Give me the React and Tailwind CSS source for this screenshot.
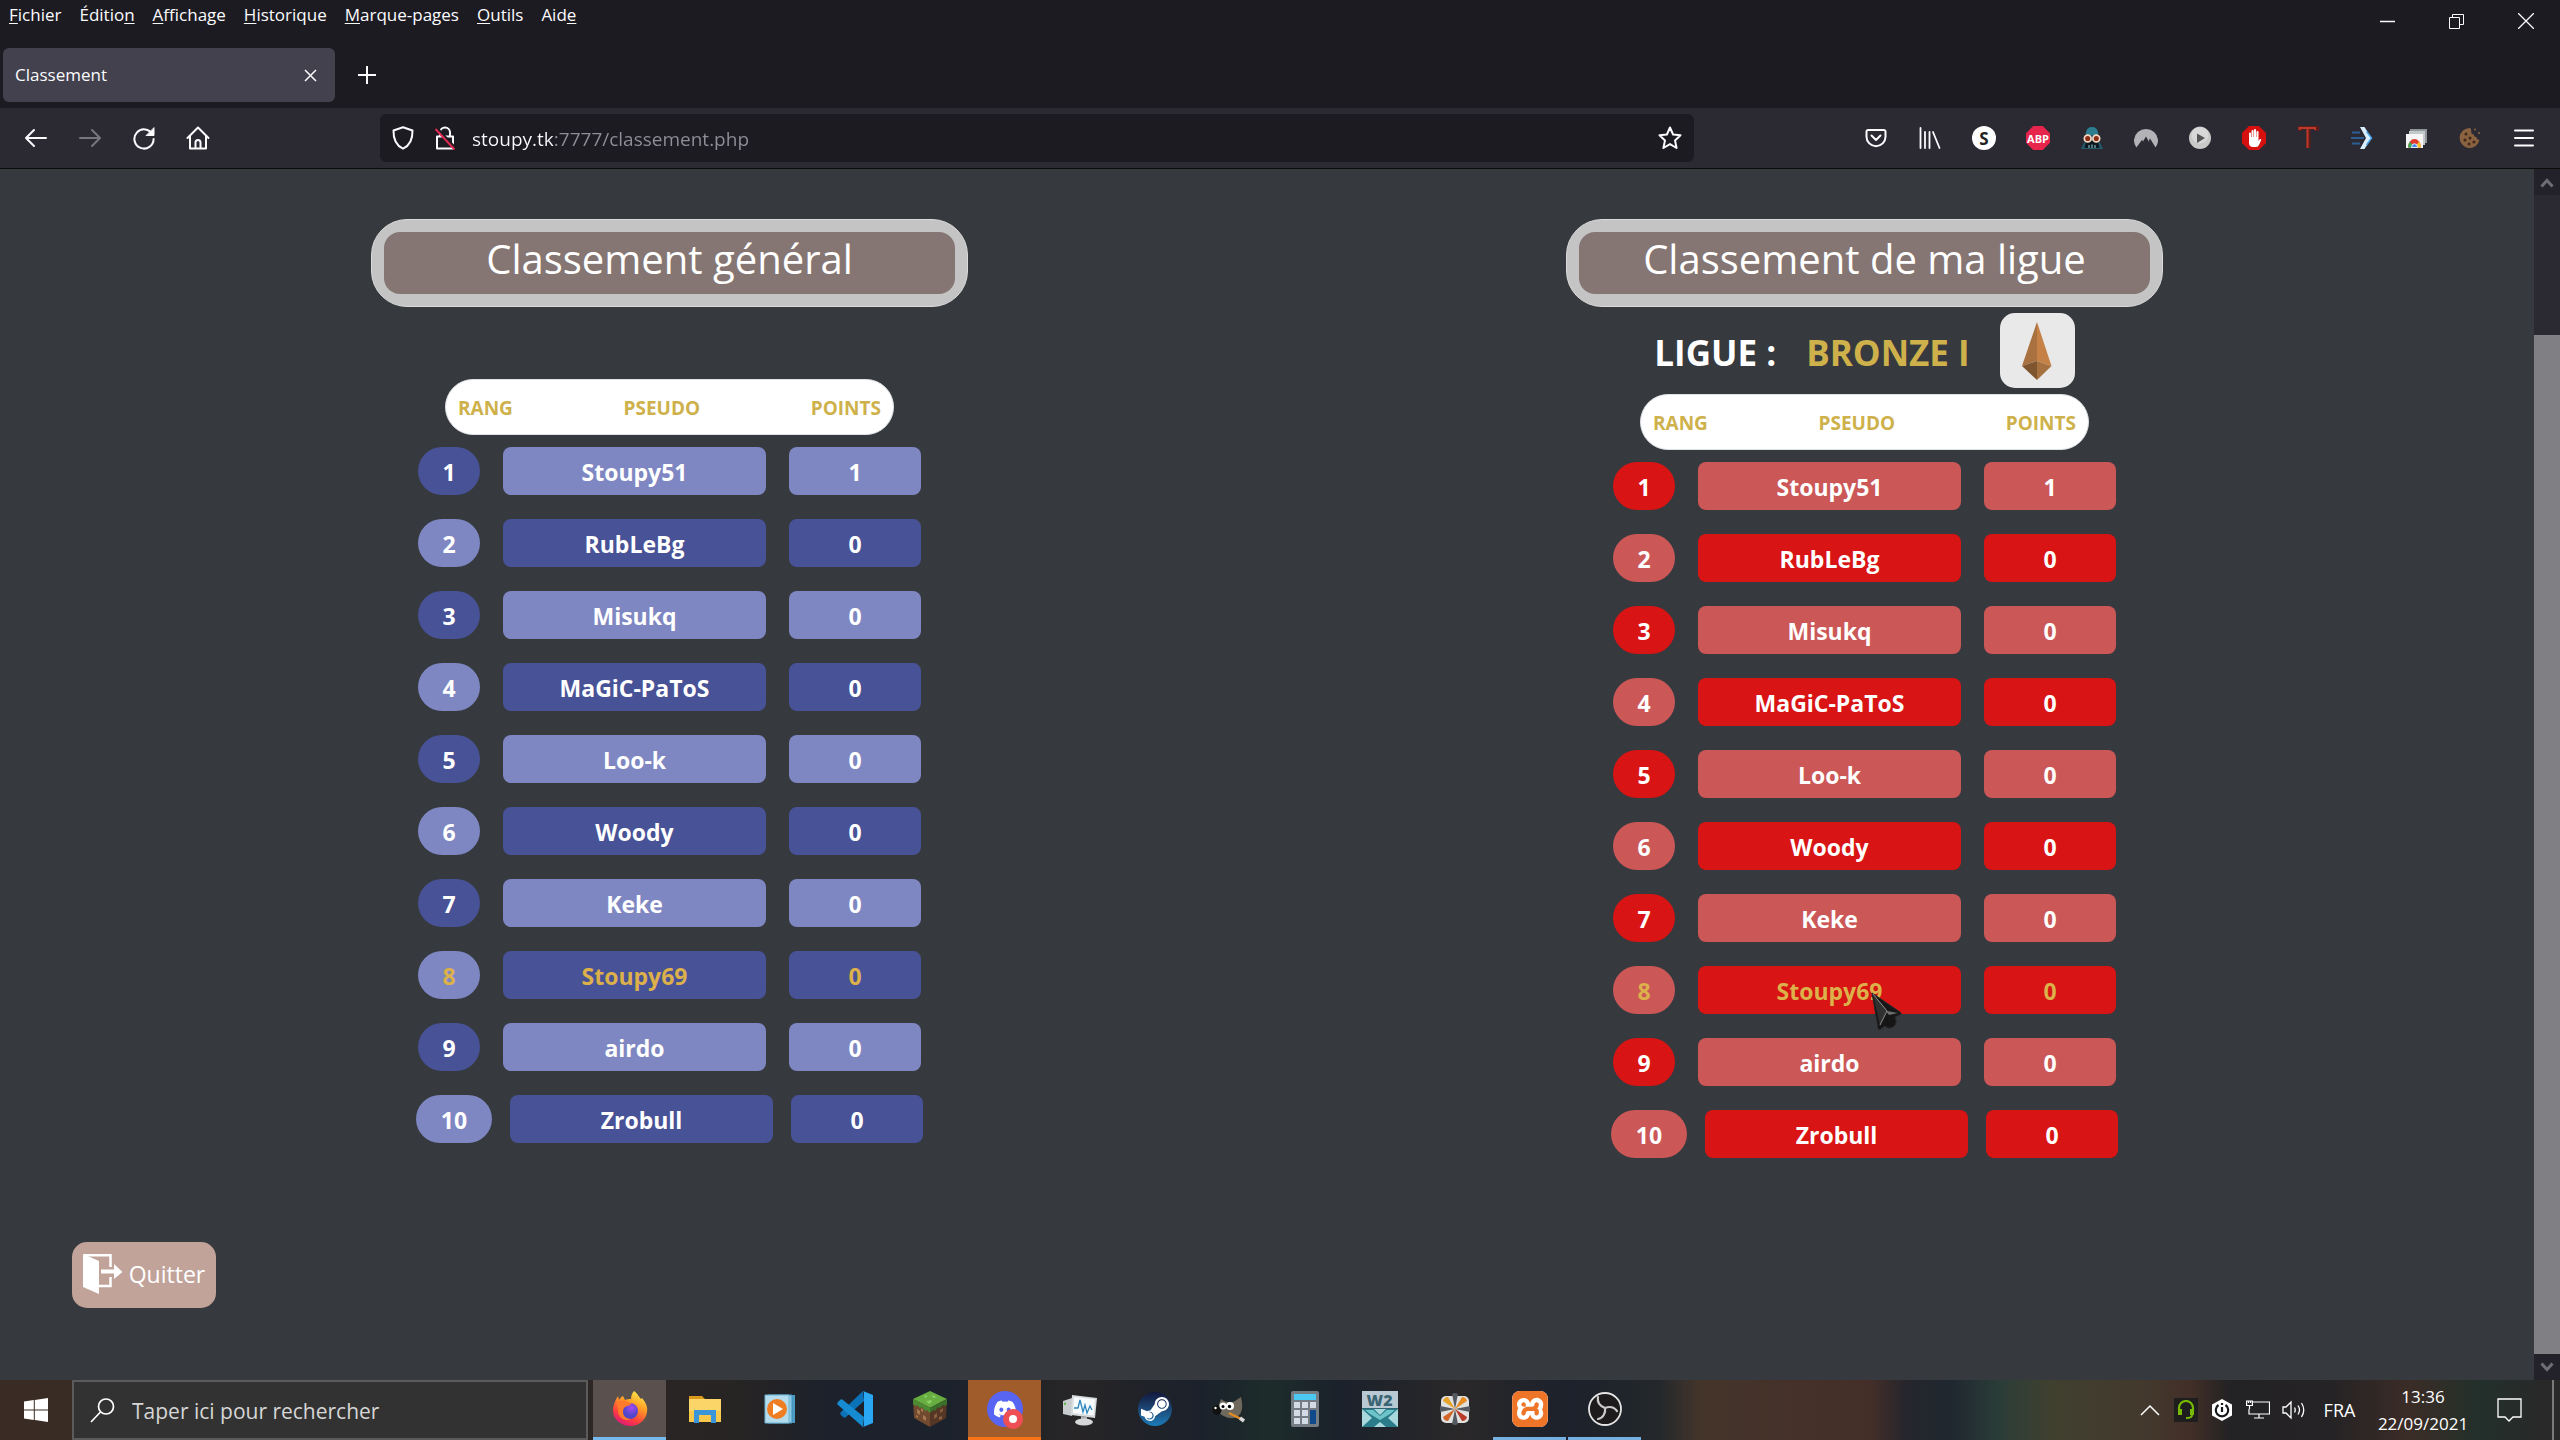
import React from "react";
import { FaDiscord, FaSteamSymbol } from "react-icons/fa";
import { SiXampp } from "react-icons/si";

const players = [
  ["1", "Stoupy51", "1"],
  ["2", "RubLeBg", "0"],
  ["3", "Misukq", "0"],
  ["4", "MaGiC-PaToS", "0"],
  ["5", "Loo-k", "0"],
  ["6", "Woody", "0"],
  ["7", "Keke", "0"],
  ["8", "Stoupy69", "0"],
  ["9", "airdo", "0"],
  ["10", "Zrobull", "0"],
];

const themes = {
  blue: { dark: "bg-[#485297]", light: "bg-[#7e87c2]" },
  red: { dark: "bg-[#d91414]", light: "bg-[#cb5757]" },
};

const CURRENT = "Stoupy69";

/* ---------- browser chrome ---------- */

const menus = [
  ["", "F", "ichier"],
  ["Éditio", "n", ""],
  ["", "A", "ffichage"],
  ["", "H", "istorique"],
  ["", "M", "arque-pages"],
  ["", "O", "utils"],
  ["Aid", "e", ""],
];

function Line({ size = 24, width = 2, className = "", children }) {
  return (
    <svg
      width={size}
      height={size}
      viewBox="0 0 24 24"
      fill="none"
      stroke="currentColor"
      strokeWidth={width}
      strokeLinecap="round"
      strokeLinejoin="round"
      className={className}
      aria-hidden="true"
    >
      {children}
    </svg>
  );
}

function IconButton({ label, className = "", children }) {
  return (
    <button aria-label={label} className={`flex h-12 shrink-0 items-center justify-center ${className}`}>
      {children}
    </button>
  );
}

function TitleArea() {
  return (
    <header className="flex items-start justify-between bg-[#1c1b22]">
      <div>
        <nav className="flex h-12 items-start gap-[18px] pt-[3px] pl-[9px] text-[17px] leading-[23px] text-[#fbfbfe]">
          {menus.map(([a, k, b]) => (
            <button key={a + k + b}>
              {a}
              <span className="underline underline-offset-2">{k}</span>
              {b}
            </button>
          ))}
        </nav>
        <div className="flex h-[60px] items-start pl-[3px]">
          <div className="flex h-[54px] w-[332px] items-center justify-between rounded-md bg-[#42414d] pr-[18px] pl-3 text-[17px] text-[#fbfbfe]">
            <span>Classement</span>
            <button aria-label="Fermer l'onglet">
              <svg width="13" height="13" viewBox="0 0 13 13" stroke="currentColor" strokeWidth="1.500">
                <path d="M1 1l11 11M12 1L1 12" />
              </svg>
            </button>
          </div>
          <IconButton label="Nouvel onglet" className="w-16 pt-1.5">
            <svg width="18" height="18" viewBox="0 0 18 18" stroke="#fbfbfe" strokeWidth="2">
              <path d="M9 0v18M0 9h18" />
            </svg>
          </IconButton>
        </div>
      </div>
      <div className="flex h-[42px] text-[#fbfbfe]">
        <button aria-label="Réduire" className="flex w-[69px] items-center justify-center">
          <svg width="15" height="15" stroke="currentColor" fill="none"><path d="M0 7.500h15" strokeWidth="1.500" /></svg>
        </button>
        <button aria-label="Restaurer" className="flex w-[69px] items-center justify-center">
          <svg width="15" height="15" viewBox="0 0 15 15" stroke="currentColor" fill="none">
            <path d="M.5 3.500h10v11H.5zM3.500 3.500v-3h11v10h-4" />
          </svg>
        </button>
        <button aria-label="Fermer" className="flex w-[69px] items-center justify-center">
          <svg width="16" height="16" stroke="currentColor" strokeWidth="1.300"><path d="M0 0l16 16M16 0L0 16" /></svg>
        </button>
      </div>
    </header>
  );
}

const extensions = [
  ["Pocket", <Line><path d="M4.200 4h15.600a1.700 1.700 0 0 1 1.700 1.700v5a9.500 9.500 0 0 1-19 0v-5A1.700 1.700 0 0 1 4.200 4z" /><path d="M7.500 9.500L12 14l4.500-4.500" /></Line>],
  ["Bibliothèque", <Line width={1.8}><path d="M2.500 2v20M7 6v16M11.500 6v16M15 6l6.500 16" /></Line>],
  ["Stylus", <span className="flex size-6 items-center justify-center rounded-full bg-white text-[17px] leading-none font-bold text-[#222]">S</span>],
  ["Adblock Plus", (
    <span className="flex size-6 items-center justify-center bg-[#e6244c] text-[11px] leading-none font-bold text-white [clip-path:polygon(30%_0,70%_0,100%_30%,100%_70%,70%_100%,30%_100%,0_70%,0_30%)]">ABP</span>
  )],
  ["Masque", (
    <svg width="24" height="24" viewBox="0 0 24 24">
      <path d="M12 1c4.500 0 6 3 6.300 7L19 15l4 8H1l4-8 .7-7C6 4 7.500 1 12 1z" fill="#245c6d" />
      <path d="M12 1c4 0 6 3 6 8H6c0-5 2-8 6-8z" fill="#2d7d90" />
      <path d="M6 15h12l1.500 7h-15z" fill="#101820" />
      <circle cx="7.700" cy="12.500" r="3.400" fill="#8a2d17" stroke="#f4d8c4" strokeWidth="1.700" />
      <circle cx="16.300" cy="12.500" r="3.400" fill="#8a2d17" stroke="#f4d8c4" strokeWidth="1.700" />
      <path d="M9 19v3M12 18.500v3.500M15 19v3" stroke="#8fd3e0" strokeWidth="1" />
    </svg>
  )],
  ["NordVPN", (
    <svg width="24" height="24" viewBox="0 0 24 24">
      <path d="M2.400 21.500A12 11.500 0 1 1 21.600 21.500L16 12.500l-1.200 2.200.8 2.300-3.600-6.500-3 5-.9-1.700z" fill="#b3b3b7" />
    </svg>
  )],
  ["Lecture", (
    <svg width="24" height="24" viewBox="0 0 24 24">
      <circle cx="12" cy="12" r="11" fill="#c9c9c9" />
      <circle cx="12" cy="9" r="8.500" fill="#dedede" opacity=".7" />
      <path d="M9 7.500l8 4.500-8 5z" fill="#555" />
    </svg>
  )],
  ["AdBlock", (
    <svg width="24" height="24" viewBox="0 0 24 24">
      <path d="M7 0h10l7 7v10l-7 7H7l-7-7V7z" fill="#d6100f" />
      <path d="M7 12V7.500a1 1 0 0 1 2 0V11h.5V5a1 1 0 0 1 2.100 0v6h.4V4a1 1 0 0 1 2.100 0v7h.4V6a1 1 0 0 1 2 0v9l1-1.500c.8-1 2-.4 1.700.6L17 19c-.6 1.300-1.500 2-3 2h-3c-2.500 0-4-1.500-4-4z" fill="#fff" />
    </svg>
  )],
  ["Tampon", (
    <svg width="24" height="24" viewBox="0 0 24 24" fill="none">
      <path d="M4 5V1.500h17V5M12.500 2v20" stroke="#5f1c18" strokeWidth="4" />
      <path d="M3.500 4V2h15.500v2M11.500 2v20" stroke="#bd3a2a" strokeWidth="2" />
    </svg>
  )],
  ["Raccourci", (
    <svg width="24" height="24" viewBox="0 0 24 24">
      <path d="M10 1h4.500l7 11-7 11H10l6-11z" fill="#d9efff" />
      <path d="M16.500 5.500L21.500 12l-5 7" fill="none" stroke="#4aa3e8" strokeWidth="1.500" />
      <path d="M2 6.500h8M1 12h13M2 17.500h8" stroke="#2d5f94" strokeWidth="1.800" />
    </svg>
  )],
  ["Chrome Store", (
    <svg width="24" height="24" viewBox="0 0 24 24">
      <path d="M6 3h17v14H6z" fill="#8f979b" /><path d="M5 5h16v14H5z" fill="#c4c9cc" />
      <path d="M2 8h17v14H2z" fill="#f5f5f5" />
      <path d="M4 21.500a6.500 8.500 0 0 1 13 0z" fill="#e23b2e" />
      <path d="M4 21.500a6.500 8.500 0 0 1 2-6l4 6z" fill="#38a852" /><path d="M17 21.500a6.500 8.500 0 0 0-2-6l-4 6z" fill="#f7c52c" />
      <path d="M7.500 21.500a3 3.800 0 0 1 6 0z" fill="#4688f1" stroke="#fff" strokeWidth=".8" />
    </svg>
  )],
  ["Cookies", (
    <svg width="24" height="24" viewBox="0 0 24 24">
      <path d="M12 2a10 10 0 1 0 9.500 11.500c-2 .5-3-.5-2.800-2.500-2 .3-3-.8-2.700-2.500-2 0-3-1-2.700-3C13 4 13.500 3 12 2z" fill="#8b6240" />
      <g fill="#3f2a1a"><circle cx="8" cy="8" r="1.500" /><circle cx="7" cy="14" r="1.600" /><circle cx="12" cy="12" r="1.500" /><circle cx="11" cy="18" r="1.500" /><circle cx="16" cy="16" r="1.600" /></g>
      <g fill="#8b6240"><circle cx="17" cy="3.500" r="1" /><circle cx="21" cy="7" r="1.100" /></g>
    </svg>
  )],
];

function Toolbar() {
  return (
    <div className="flex h-[61px] items-start justify-between border-b border-[#0c0c0d] bg-[#2b2a33] pt-1.5 pr-[9px] pl-[9px] text-[#fbfbfe]">
      <div className="flex">
        <IconButton label="Précédent" className="w-[54px]"><Line><path d="M22 12H2.500M10 4l-8 8 8 8" /></Line></IconButton>
        <IconButton label="Suivant" className="w-[54px] text-[#77767e]"><Line><path d="M2 12h19.500M14 4l8 8-8 8" /></Line></IconButton>
        <IconButton label="Actualiser" className="w-[54px]">
          <Line><path d="M20.500 8.500A9.600 9.600 0 1 0 21.600 13" /><path d="M22 2v7.500h-7.500z" fill="currentColor" strokeWidth="1" /></Line>
        </IconButton>
        <IconButton label="Accueil" className="w-[54px]">
          <Line><path d="M1.500 12L12 1.500 22.500 12M4 10v12.500h16V10M9.500 22v-5.500a2.500 2.500 0 0 1 5 0V22" /></Line>
        </IconButton>
      </div>
      <div className="ml-[155px] flex h-12 min-w-0 flex-1 items-center rounded-md bg-[#1c1b22] pr-3 pl-[11px]">
        <Line className="shrink-0"><path d="M12 1.300l9.500 3.200c.2 8-1.500 14.500-9.500 18.200C4 19 2.300 12.500 2.500 4.500z" /></Line>
        <svg width="24" height="24" viewBox="0 0 24 24" fill="none" className="ml-[18px] shrink-0" aria-hidden="true">
          <path d="M7 10.500V6.500a5 5 0 0 1 10 0v4M4 10.500h16v12H4z" stroke="#fbfbfe" strokeWidth="2" strokeLinejoin="round" />
          <path d="M4.500 2.500l18 19.500" stroke="#1c1b22" strokeWidth="2.500" />
          <path d="M2.500 3l19 20.500" stroke="#e22850" strokeWidth="2" />
        </svg>
        <input
          aria-label="Adresse"
          defaultValue="stoupy.tk:7777/classement.php"
          className="ml-[15px] h-12 min-w-0 flex-1 bg-[linear-gradient(90deg,#fbfbfe_82px,#8f8f97_82px)] bg-clip-text pt-0.5 text-[19px] text-transparent outline-none"
        />
        <Line className="shrink-0"><path d="M12 1.500l3.100 7 7.400.8-5.500 5.100 1.600 7.600-6.600-3.900L5.400 22 7 14.400 1.500 9.300l7.400-.8z" /></Line>
      </div>
      <div className="ml-[155px] flex">
        {extensions.map(([name, icon]) => (
          <IconButton key={name} label={name} className="w-[54px]">{icon}</IconButton>
        ))}
        <IconButton label="Menu" className="w-[54px]">
          <Line><path d="M3 4.500h18M3 12h18M3 19.500h18" /></Line>
        </IconButton>
      </div>
    </div>
  );
}

function Scrollbar() {
  return (
    <div className="flex w-[26px] shrink-0 flex-col items-center bg-[#2b2a33]">
      <button aria-label="Défiler vers le haut" className="flex h-[26px] w-full items-center justify-center bg-[#23222b]">
        <svg width="14" height="11" fill="none" stroke="#6f6e77" strokeWidth="3"><path d="M1.500 9.500l5.500-6 5.500 6" /></svg>
      </button>
      <div className="flex w-full flex-1 flex-col">
        <div className="flex-[14]" />
        <div className="flex-[102] bg-[#7f7f84]" />
      </div>
      <button aria-label="Défiler vers le bas" className="flex h-[26px] w-full items-center justify-center bg-[#23222b]">
        <svg width="14" height="11" fill="none" stroke="#6f6e77" strokeWidth="3"><path d="M1.500 1.500l5.500 6 5.500-6" /></svg>
      </button>
    </div>
  );
}

/* ---------- page ---------- */

function Title({ children }) {
  return (
    <div className="w-[597px] rounded-[36px] border border-[#dadada] bg-[#c4c4c4] p-3">
      <h1 className="rounded-2xl bg-[#857673] pt-px pb-[9px] text-center text-[40px] leading-[52px] text-white">{children}</h1>
    </div>
  );
}

function Pointer() {
  return (
    <svg width="34" height="40" viewBox="0 0 34 40" className="absolute top-[26px] left-[173px]" aria-hidden="true">
      <path d="M1 1l28 19c2 1 1 3-1 3l-4 2c2 5 1 8-2 10s-6 1-8-1l-4 3c-1 1-3 1-3-1z" fill="#161616" stroke="#2a2a2a" />
      <path d="M2 2l14 17 11 2-9 2z" fill="#6e6e6e" />
      <path d="M2 2l14 17-7 15z" fill="#303030" />
      <path d="M2 2l14 17-7 14" fill="none" stroke="#8c8c8c" strokeWidth="1" />
    </svg>
  );
}

function Ranking({ theme, label, pointer }) {
  const { dark, light } = themes[theme];
  return (
    <table aria-label={label} className="flex flex-col items-center font-bold">
      <thead className="block">
        <tr className="flex h-14 w-[449px] items-center justify-between rounded-[28px] border border-[#dee2e6] bg-white px-3 pt-0.5 text-[19px] text-[#ceb14b]">
          <th>RANG</th>
          <th>PSEUDO</th>
          <th>POINTS</th>
        </tr>
      </thead>
      <tbody className="mt-3 flex flex-col items-center gap-6 text-[23px] leading-[46px]">
        {players.map(([rank, name, points], i) => {
          const wide = rank.length > 1;
          const pill = i % 2 ? light : dark;
          const bar = i % 2 ? dark : light;
          return (
            <tr key={rank} className={`flex h-12 text-center ${wide ? "gap-[18px]" : "gap-[23px]"} ${name === CURRENT ? "text-[#dcb04a]" : "text-white"}`}>
              <td className={`rounded-[26px] pt-0.5 ${wide ? "w-[76px]" : "w-[62px]"} ${pill}`}>{rank}</td>
              <td className={`relative w-[263px] rounded-lg pt-0.5 ${bar}`}>
                {name}
                {pointer && name === CURRENT && <Pointer />}
              </td>
              <td className={`w-[132px] rounded-lg pt-0.5 ${bar}`}>{points}</td>
            </tr>
          );
        })}
      </tbody>
    </table>
  );
}

function BronzeGem() {
  return (
    <div className="flex size-[75px] items-center justify-center rounded-[15px] bg-[#e9e9e9]">
      <svg width="30" height="58" viewBox="0 0 30 58" role="img" aria-label="Bronze I">
        <path d="M15 0L0 44l15-5z" fill="#a9713f" />
        <path d="M15 0l14.500 44L15 39z" fill="#c58146" />
        <path d="M0 44l15-5v19z" fill="#7f5530" />
        <path d="M29.500 44L15 39v19z" fill="#a4713f" />
      </svg>
    </div>
  );
}

function Page() {
  return (
    <main className="flex min-w-0 flex-1 flex-col justify-between bg-[#36393e] px-[72px] pt-[50px] pb-[72px]">
      <div className="grid grid-cols-2">
        <section className="flex flex-col items-center gap-[72px]">
          <Title>Classement général</Title>
          <Ranking theme="blue" label="Classement général" />
        </section>
        <section className="flex flex-col items-center gap-1.5">
          <Title>Classement de ma ligue</Title>
          <div className="flex items-center text-[35px] leading-[48px] font-bold text-white">
            <h2 className="pt-1">LIGUE :</h2>
            <span className="ml-[30px] pt-1 text-[#ceb14b]">BRONZE I</span>
            <span className="ml-[30px]"><BronzeGem /></span>
          </div>
          <Ranking theme="red" label="Classement de ma ligue" pointer />
        </section>
      </div>
      <button className="flex h-[66px] w-36 items-center justify-center gap-1.5 rounded-[15px] bg-[#c1a39a] pb-0.5 text-[23px] text-white">
        <svg width="40" height="40" viewBox="0 0 40 40" aria-hidden="true">
          <path d="M0 0l16 7v33L0 33z" fill="#fff" />
          <path d="M1 1.200h26.500V13M27.500 23v9H16" fill="none" stroke="#fff" strokeWidth="2.500" />
          <path d="M18 15.500h13v-5.500l8.500 8L31 25v-5.500H18z" fill="#fff" />
        </svg>
        Quitter
      </button>
    </main>
  );
}

/* ---------- taskbar ---------- */

const apps = [
  ["Firefox", (
    <svg width="36" height="36" viewBox="0 0 36 36">
      <defs>
        <linearGradient id="fx" x1=".8" y1="0" x2=".3" y2="1"><stop offset="0" stopColor="#fff14d" /><stop offset=".4" stopColor="#ff9a25" /><stop offset=".75" stopColor="#ff3b3f" /><stop offset="1" stopColor="#d81a7c" /></linearGradient>
        <radialGradient id="fxg" cx=".6" cy=".3"><stop offset="0" stopColor="#a44af0" /><stop offset="1" stopColor="#5147c9" /></radialGradient>
      </defs>
      <path d="M22 0c4 3 5 6 7 8l1-1c4 5 6 9 5 14-1 8-8 14-17 14S1 28 1 20C1 14 4 8 6 5l1 4c1-2 2-3 4-4l2 4c2-1 4-1 6-1 0-3 1-6 3-8z" fill="url(#fx)" />
      <circle cx="18" cy="20" r="8" fill="url(#fxg)" />
      <path d="M5 12c3-3 8-3 11-1l3 1c0 2-2 3-4 3-3 1-4 3-4 6 0 4 3 7 8 7-7 3-13-2-13-8z" fill="#ff7a2a" />
    </svg>
  ), "active"],
  ["Explorateur", (
    <svg width="36" height="36" viewBox="0 0 36 36">
      <path d="M2 5h13l3 3h13v4H2z" fill="#d99a1b" /><path d="M2 8h32v23H2z" fill="#fbd568" />
      <path d="M2 20h32v11H2z" fill="#f8c84c" />
      <path d="M7 19h22v13h-5v-8H12v8H7z" fill="#3a95d9" />
    </svg>
  )],
  ["Lecteur", (
    <svg width="36" height="36" viewBox="0 0 36 36">
      <path d="M10 4h23v28H10z" fill="#4c9cc4" /><path d="M6 4h24v28H6z" fill="#8fcae4" stroke="#3f8fb8" /><path d="M3 4h24v28H3z" fill="#b5dcec" stroke="#72b5d3" />
      <circle cx="15" cy="18" r="10" fill="#ef7d22" /><path d="M11 12l10 6-10 6z" fill="#fff" />
    </svg>
  )],
  ["VS Code", (
    <svg width="36" height="36" viewBox="0 0 36 36">
      <path d="M26 0L4 21c-1 1-1 2 0 3l2 2c1 1 2 1 3 0L27 10z" fill="#0c72b8" />
      <path d="M26 36L1 14c-1-1-1-2 0-3l2-2c1-1 2-1 3 0l21 17z" fill="#168bd2" />
      <path d="M26 0l10 4v28l-10 4c1-1 1-2 1-3V3c0-1 0-2-1-3z" fill="#2aa7f2" />
    </svg>
  )],
  ["Minecraft", (
    <svg width="36" height="36" viewBox="0 0 36 36">
      <path d="M18 0l17 8-17 9L1 8z" fill="#67ad42" /><path d="M1 8l17 9v19L2 27z" fill="#70492f" /><path d="M35 8l-17 9v19l16-9z" fill="#553524" />
      <path d="M1 8l17 9v5l-3-3-2 1-3-4-2 1-3-3-2 1-2-2z" fill="#4b8c32" /><path d="M35 8l-17 9v5l3-3 2 1 3-4 2 1 3-3 2 1 2-2z" fill="#39702a" />
      <path d="M5 18l3 2v4l-3-2zM11 24l3 2v4l-3-2zM9 17l2 1v3l-2-1zM4 24l2 1v2l-2-1z" fill="#a77952" /><path d="M22 24l3-2v4l-3 2zM28 19l3-2v3l-3 2zM27 26l3-1v3l-3 1z" fill="#8a5f40" />
      <path d="M12 4l4 1-3 2zM20 4l5 2-4 1zM14 10l5-1 1 2-3 2z" fill="#8bcf62" />
    </svg>
  )],
  ["Discord", (
    <span className="relative flex size-9 items-center justify-center rounded-full bg-[#5865f2] text-white">
      <FaDiscord size={24} />
      <span className="absolute right-0 -bottom-0.5 flex size-5 items-center justify-center rounded-full bg-[#ed4f55]"><span className="size-2 rounded-full bg-white" /></span>
    </span>
  ), "alert"],
  ["Moniteur", (
    <svg width="36" height="36" viewBox="0 0 36 36">
      <path d="M1 10l9-3v18l-9-2z" fill="#c9ccce" /><path d="M2 12l2-.5v2L2 14z" fill="#53b640" />
      <path d="M10 4l25 3-2 20-24-3z" fill="#d9dcdd" /><path d="M12 6l21 2.500-1.500 16L11 22z" fill="#f7fbfd" />
      <path d="M12 17l4 0 2-8 3 12 2-7 2 8 3-7 2 4" fill="none" stroke="#2d86bd" strokeWidth="1.300" />
      <path d="M19 25l6 1v3h-6z" fill="#a9adaf" /><ellipse cx="22" cy="31" rx="9" ry="3.500" fill="#d5d7d8" />
    </svg>
  )],
  ["Steam", (
    <span className="flex size-[34px] items-center justify-center rounded-full bg-linear-to-b from-[#12183c] to-[#1a7db8] text-white"><FaSteamSymbol size={32} /></span>
  )],
  ["GIMP", (
    <svg width="36" height="36" viewBox="0 0 36 36">
      <path d="M6 16l3-8c5 4 10 4 14 2l6-4c2 9 2 16-4 20-6 3-14 0-20-6z" fill="#6f685c" />
      <ellipse cx="5" cy="19" rx="4.500" ry="5" fill="#111" /><circle cx="3.500" cy="17" r="1.200" fill="#fff" />
      <circle cx="11" cy="15" r="3.500" fill="#fff" /><circle cx="18" cy="15" r="4" fill="#fff" /><circle cx="11" cy="15.500" r="1.500" /><circle cx="17.500" cy="15.500" r="1.700" />
      <path d="M17 22l12 6" stroke="#e38b25" strokeWidth="2.500" /><path d="M28 27l4 3" stroke="#d9d9d9" strokeWidth="3.500" />
    </svg>
  )],
  ["Calculatrice", (
    <svg width="28" height="36" viewBox="0 0 28 36">
      <rect width="28" height="36" rx="2" fill="#757c84" /><path d="M3 3h22v6H3z" fill="#4cc9f0" />
      <g fill="#d3dbe6"><path d="M3 11h6v6H3zM11 11h6v6h-6zM19 11h6v6h-6zM3 19h6v6H3zM11 19h6v6h-6zM3 27h6v6H3zM11 27h6v6h-6z" /></g>
      <path d="M19 19h6v14h-6z" fill="#114a8b" />
    </svg>
  )],
  ["W2X", (
    <span className="relative flex size-9 items-start justify-center bg-[#a9d8dc]">
      <svg width="36" height="36" viewBox="0 0 36 36" className="absolute inset-0" aria-hidden="true">
        <path d="M0 0h36v17H0z" fill="#b9c9d3" />
        <path d="M0 18h12l6 6 6-6h12l-10 9 10 9H24l-6-5-6 5H0l10-9z" fill="#2a7c8a" />
        <path d="M3 19h8l7 6 7-6h8l-5 4-10 6-10-6z" fill="#6ec4c8" />
        <path d="M0 17.500h36" stroke="#2f6570" />
      </svg>
      <span className="relative text-base leading-[18px] font-extrabold text-[#3b6474]">W2</span>
    </span>
  )],
  ["Éventail", (
    <svg width="30" height="32" viewBox="0 0 30 32">
      <rect x="1" y="3" width="28" height="27" rx="5" fill="#e0e0e0" />
      <path d="M12 1q3-2 6 0l-3 15zM12 31q3 2 6 0l-3-15zM0 13q-1 3 0 6l15-3zM30 13q1 3 0 6l-15-3z" fill="#555a60" />
      <path d="M3 8q1-4 5-4l7 12z" fill="#e8a32b" /><path d="M27 8q-1-4-5-4l-7 12z" fill="#e88d22" />
      <path d="M3 24q1 4 5 4l7-12z" fill="#d0662a" /><path d="M27 24q-1 4-5 4l-7-12z" fill="#b93a26" />
    </svg>
  )],
  ["XAMPP", <SiXampp size={36} className="rounded-lg bg-white text-[#ee7428]" />, "open"],
  ["OBS Studio", (
    <svg width="36" height="36" viewBox="0 0 36 36">
      <circle cx="18" cy="18" r="16" fill="#1d1b1c" stroke="#e4e4e4" strokeWidth="1.800" />
      <g fill="none" stroke="#c9c9c9" strokeWidth="2.200" strokeLinecap="round">
        <path d="M18 17c-5-2-8-6-7-11" /><path d="M18 17c5-2 9-1 12 3" /><path d="M18 17c1 5-2 10-7 11" />
      </g>
    </svg>
  ), "open"],
];

const appStates = {
  active: "border-[#76b9ed] bg-[#5a514e]",
  alert: "border-[#f97316] bg-[#a05d2b]",
  open: "border-[#76b0e0]",
};

function Taskbar() {
  return (
    <footer className="flex h-[60px] items-stretch bg-[linear-gradient(90deg,#3a2c24_0px,#2c2624_590px,#272424_740px,#1c212b_830px,#1c222c_950px,#272526_1075px,#1b212b_1200px,#1d2c2a_1270px,#1b212b_1340px,#2a2829_1460px,#1c212b_1570px,#24282b_1660px,#44352b_1700px,#452e28_1870px,#26262c_1905px,#1f272f_1950px,#2b3d38_2000px,#40402f_2050px,#43382d_2150px,#422f27_2190px,#232224_2230px,#252325_2330px,#3b2c26_2410px,#22302b_2480px,#29292a_2540px)] text-white">
      <button aria-label="Démarrer" className="flex w-[72px] items-center justify-center">
        <svg width="24" height="24" viewBox="0 0 24 24" fill="#fff"><path d="M0 3.400L9.800 2v9.500H0zM10.800 1.900L24 0v11.500H10.800zM0 12.500h9.800V22L0 20.600zM10.800 12.500H24V24l-13.200-1.900z" /></svg>
      </button>
      <label className="flex w-[516px] items-center gap-[17px] border-2 border-[#5b5b5b] bg-[#323232] pl-4">
        <svg width="25" height="25" viewBox="0 0 25 25" fill="none" stroke="#fff" strokeWidth="1.700"><circle cx="16" cy="8.500" r="7.500" /><path d="M10.500 14L1 24" /></svg>
        <input aria-label="Rechercher" placeholder="Taper ici pour rechercher" className="min-w-0 flex-1 bg-transparent pt-1 text-[21px] outline-none placeholder:text-[#d6d6d6]" />
      </label>
      <div className="ml-[5px] flex gap-0.5">
        {apps.map(([name, icon, state]) => (
          <button key={name} aria-label={name} className={`flex w-[73px] items-center justify-center border-b-3 ${state ? appStates[state] : "border-transparent"}`}>
            {icon}
          </button>
        ))}
      </div>
      <div className="ml-auto flex items-center">
        <button aria-label="Icônes cachées" className="w-9 pl-2"><svg width="20" height="12" fill="none" stroke="#fff" strokeWidth="1.500"><path d="M1 11l9-9 9 9" /></svg></button>
        <button aria-label="Casque" className="flex w-9 justify-center">
          <span className="flex size-6 items-center justify-center bg-[#1e1e1e]">
            <svg width="18" height="20" viewBox="0 0 18 20" fill="none" stroke="#76b900" strokeWidth="2.200"><path d="M2 10V8a7 7 0 0 1 14 0v2" /><path d="M3 9v6M15 9v6" strokeWidth="4" /><path d="M15 15c0 2-2 3-6 3" strokeWidth="2" /></svg>
          </span>
        </button>
        <button aria-label="Alimentation" className="flex w-9 justify-center">
          <svg width="24" height="24" viewBox="0 0 24 24" fill="none"><path d="M12 1l10 5.500v11L12 23 2 17.500v-11z" fill="#fff" /><path d="M8.500 7a6.200 6.200 0 1 0 7 0M12 5v2M12 9v5" stroke="#16181c" strokeWidth="2.200" /></svg>
        </button>
        <button aria-label="Réseau" className="flex w-9 justify-center">
          <svg width="24" height="20" viewBox="0 0 24 20" fill="none" stroke="#fff" strokeWidth="1.200"><path d="M7 2h16.500v12H3V9M8 18h10M13 14v4" /><path d="M.6 1h5.800v4.500H.6zM3.500 5.500V9M2.500 1v2M4.500 1v2" /></svg>
        </button>
        <button aria-label="Volume" className="flex w-9 justify-center">
          <svg width="24" height="20" viewBox="0 0 24 20" fill="none" stroke="#fff" strokeWidth="1.300"><path d="M1 7h3l5-5v16l-5-5H1zM12.500 7.500q1.500 2.500 0 5M16 5.500q3 4.500 0 9M19.500 3q4.500 7 0 14" /></svg>
        </button>
        <button className="w-[55px] text-center text-lg">FRA</button>
        <button className="w-28 text-center text-[17px] leading-[27px]"><time className="block">13:36</time><time className="block">22/09/2021</time></button>
        <button aria-label="Notifications" className="flex w-[60px] justify-center">
          <svg width="25" height="25" viewBox="0 0 25 25" fill="none" stroke="#fff" strokeWidth="1.300"><path d="M1 1h23v18h-8l-4 4-4-4H1z" /></svg>
        </button>
        <div className="mr-1.5 h-[60px] w-[15px] border-r-2 border-[#7a7a7a]" />
      </div>
    </footer>
  );
}

export default function App() {
  return (
    <div className="flex min-h-screen flex-col font-['Open_Sans','Noto_Sans',sans-serif]">
      <TitleArea />
      <Toolbar />
      <div className="flex flex-1 items-stretch">
        <Page />
        <Scrollbar />
      </div>
      <Taskbar />
    </div>
  );
}
